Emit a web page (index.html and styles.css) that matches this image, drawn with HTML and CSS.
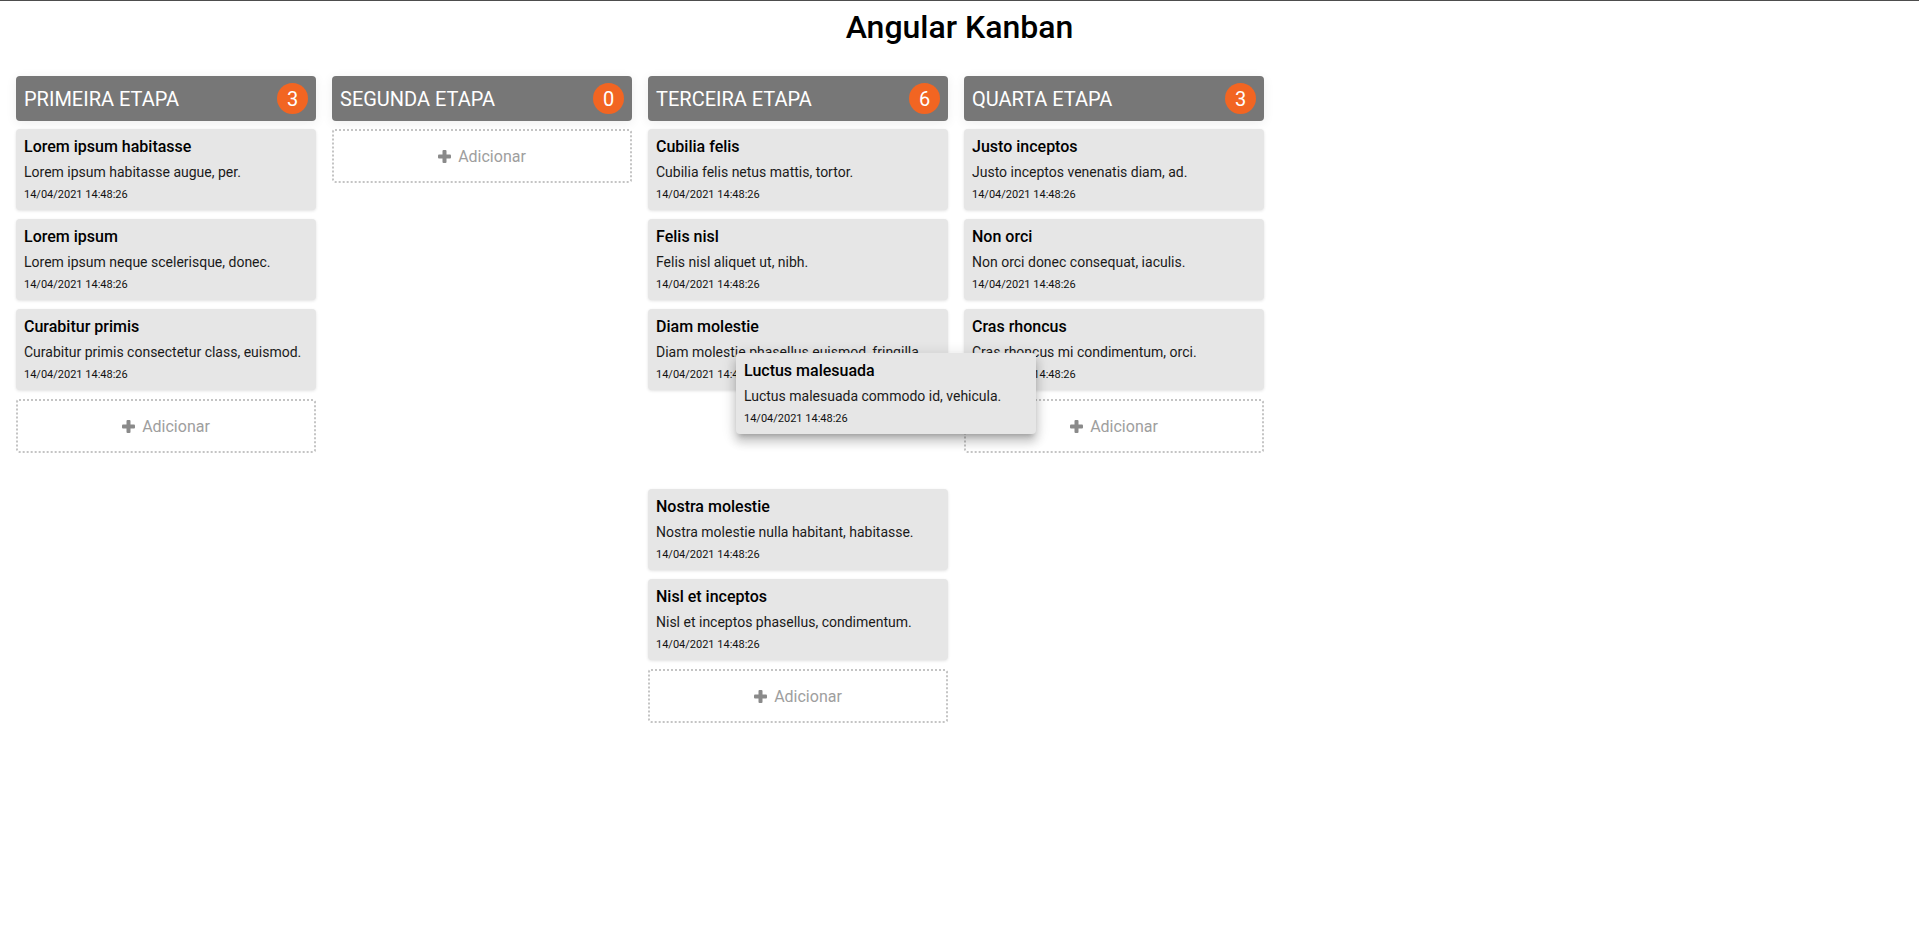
FILE: index.html
```html
<!DOCTYPE html>
<html lang="pt-BR">
<head>
<meta charset="utf-8">
<title>Angular Kanban</title>
<link rel="stylesheet" href="styles.css">
</head>
<body>
<h1 class="title">Angular Kanban</h1>
<main class="board">
  <section class="column">
    <header class="col-head"><span class="col-name">PRIMEIRA ETAPA</span><span class="badge">3</span></header>
    <div class="list">
      <article class="card"><h3 class="card-title">Lorem ipsum habitasse</h3><p class="card-desc">Lorem ipsum habitasse augue, per.</p><p class="card-date">14/04/2021 14:48:26</p></article>
      <article class="card"><h3 class="card-title">Lorem ipsum</h3><p class="card-desc">Lorem ipsum neque scelerisque, donec.</p><p class="card-date">14/04/2021 14:48:26</p></article>
      <article class="card"><h3 class="card-title">Curabitur primis</h3><p class="card-desc">Curabitur primis consectetur class, euismod.</p><p class="card-date">14/04/2021 14:48:26</p></article>
      <button class="add"><svg class="plus" width="13" height="13" viewBox="0 0 13 13"><rect x="4.5" y="0" width="4" height="13" rx="1"/><rect x="0" y="4.5" width="13" height="4" rx="1"/></svg>Adicionar</button>
    </div>
  </section>
  <section class="column">
    <header class="col-head"><span class="col-name">SEGUNDA ETAPA</span><span class="badge">0</span></header>
    <div class="list">
      <button class="add"><svg class="plus" width="13" height="13" viewBox="0 0 13 13"><rect x="4.5" y="0" width="4" height="13" rx="1"/><rect x="0" y="4.5" width="13" height="4" rx="1"/></svg>Adicionar</button>
    </div>
  </section>
  <section class="column">
    <header class="col-head"><span class="col-name">TERCEIRA ETAPA</span><span class="badge">6</span></header>
    <div class="list">
      <article class="card"><h3 class="card-title">Cubilia felis</h3><p class="card-desc">Cubilia felis netus mattis, tortor.</p><p class="card-date">14/04/2021 14:48:26</p></article>
      <article class="card"><h3 class="card-title">Felis nisl</h3><p class="card-desc">Felis nisl aliquet ut, nibh.</p><p class="card-date">14/04/2021 14:48:26</p></article>
      <article class="card"><h3 class="card-title">Diam molestie</h3><p class="card-desc">Diam molestie phasellus euismod, fringilla.</p><p class="card-date">14/04/2021 14:48:26</p></article>
      <article class="card placeholder"><h3 class="card-title">Luctus malesuada</h3><p class="card-desc">Luctus malesuada commodo id, vehicula.</p><p class="card-date">14/04/2021 14:48:26</p></article>
      <article class="card"><h3 class="card-title">Nostra molestie</h3><p class="card-desc">Nostra molestie nulla habitant, habitasse.</p><p class="card-date">14/04/2021 14:48:26</p></article>
      <article class="card"><h3 class="card-title">Nisl et inceptos</h3><p class="card-desc">Nisl et inceptos phasellus, condimentum.</p><p class="card-date">14/04/2021 14:48:26</p></article>
      <button class="add"><svg class="plus" width="13" height="13" viewBox="0 0 13 13"><rect x="4.5" y="0" width="4" height="13" rx="1"/><rect x="0" y="4.5" width="13" height="4" rx="1"/></svg>Adicionar</button>
    </div>
  </section>
  <section class="column">
    <header class="col-head"><span class="col-name">QUARTA ETAPA</span><span class="badge">3</span></header>
    <div class="list">
      <article class="card"><h3 class="card-title">Justo inceptos</h3><p class="card-desc">Justo inceptos venenatis diam, ad.</p><p class="card-date">14/04/2021 14:48:26</p></article>
      <article class="card"><h3 class="card-title">Non orci</h3><p class="card-desc">Non orci donec consequat, iaculis.</p><p class="card-date">14/04/2021 14:48:26</p></article>
      <article class="card"><h3 class="card-title">Cras rhoncus</h3><p class="card-desc">Cras rhoncus mi condimentum, orci.</p><p class="card-date">14/04/2021 14:48:26</p></article>
      <button class="add"><svg class="plus" width="13" height="13" viewBox="0 0 13 13"><rect x="4.5" y="0" width="4" height="13" rx="1"/><rect x="0" y="4.5" width="13" height="4" rx="1"/></svg>Adicionar</button>
    </div>
  </section>
</main>
<article class="card drag-preview"><h3 class="card-title">Luctus malesuada</h3><p class="card-desc">Luctus malesuada commodo id, vehicula.</p><p class="card-date">14/04/2021 14:48:26</p></article>
</body>
</html>
```

FILE: styles.css
```css
html, body {
  margin: 0;
  padding: 0;
  background: #fff;
}

body {
  border-top: 1px solid #4d4d4d;
  font-family: Roboto, "Liberation Sans", Arial, sans-serif;
  color: #000;
  min-height: 936px;
  position: relative;
}

.title {
  margin: 7px 0 0;
  text-align: center;
  font-size: 32px;
  font-weight: 500;
  line-height: 38px;
  color: #000;
}

.board {
  display: flex;
  align-items: flex-start;
  gap: 16px;
  padding: 0 16px;
  margin-top: 30px;
}

.column {
  width: 300px;
  display: flex;
  flex-direction: column;
}

.col-head {
  height: 45px;
  box-sizing: border-box;
  padding: 0 8px;
  background: #777777;
  color: #fff;
  border-radius: 4px;
  display: flex;
  align-items: center;
  justify-content: space-between;
  box-shadow: 0 2px 12px rgba(0, 0, 0, 0.07);
}

.col-name {
  font-size: 20px;
  font-weight: 400;
  letter-spacing: 0;
}

.badge {
  width: 31px;
  height: 31px;
  border-radius: 50%;
  background: #f26522;
  color: #fff;
  font-size: 20px;
  display: flex;
  align-items: center;
  justify-content: center;
}

.list {
  display: flex;
  flex-direction: column;
  gap: 9px;
  margin-top: 8px;
}

.card {
  box-sizing: border-box;
  height: 81px;
  padding: 8px 8px 7px;
  background: #e6e6e6;
  border-radius: 4px;
  box-shadow: 0 1px 3px rgba(0, 0, 0, 0.12);
}

.card-title {
  margin: 0;
  font-size: 16px;
  font-weight: 500;
  line-height: 20px;
  color: #000;
}

.card-desc {
  margin: 5px 0 0;
  font-size: 14px;
  line-height: 20px;
  color: #1a1a1a;
}

.card-date {
  margin: 5px 0 0;
  font-size: 11px;
  line-height: 16px;
  color: #111;
}

.placeholder {
  visibility: hidden;
}

.add {
  box-sizing: border-box;
  height: 54px;
  width: 100%;
  border: 2px dotted #c4c4c4;
  border-radius: 3px;
  background: #fff;
  color: #9e9e9e;
  font-family: Roboto, "Liberation Sans", Arial, sans-serif;
  font-size: 16px;
  display: flex;
  align-items: center;
  justify-content: center;
  gap: 7px;
  padding: 0;
  cursor: pointer;
}

.plus {
  fill: #8a8a8a;
  display: block;
}

.drag-preview {
  position: absolute;
  left: 736px;
  top: 352px;
  width: 300px;
  box-shadow: 0 5px 5px -3px rgba(0, 0, 0, 0.2), 0 8px 10px 1px rgba(0, 0, 0, 0.14), 0 3px 14px 2px rgba(0, 0, 0, 0.12);
}
```
